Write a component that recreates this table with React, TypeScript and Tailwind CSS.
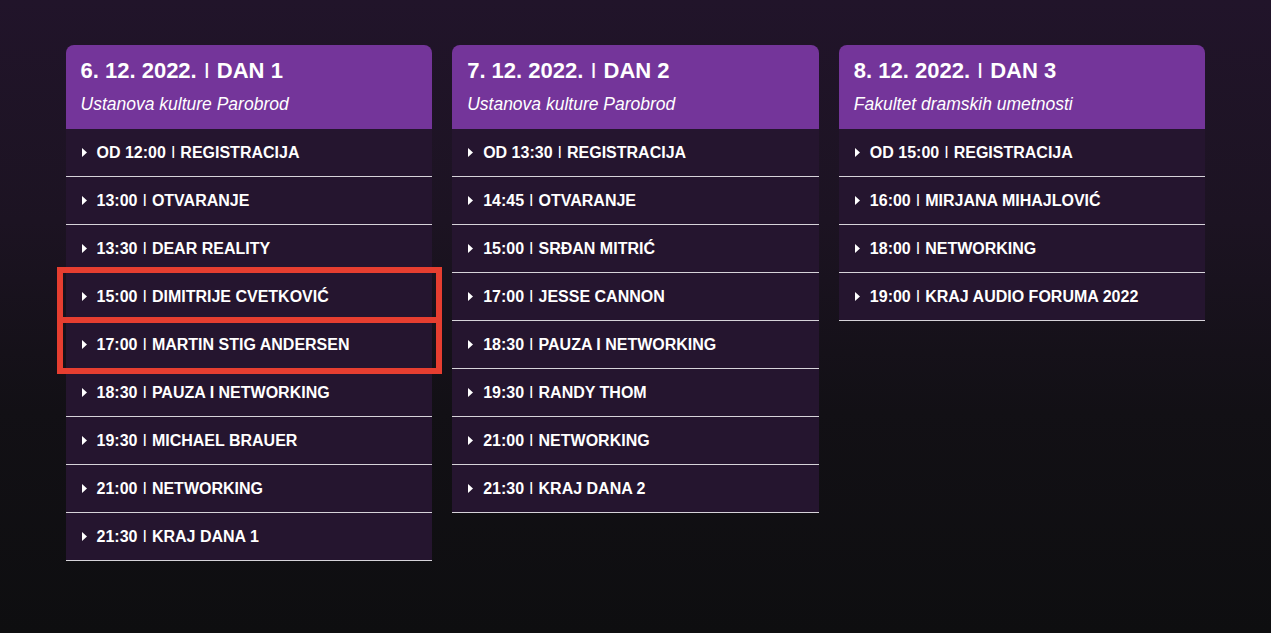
import React from "react";

type Day = { title: string; place: string; items: string[] };

const days: Day[] = [
  {
    title: "6. 12. 2022.",
    place: "Ustanova kulture Parobrod",
    items: [
      "OD 12:00|REGISTRACIJA",
      "13:00|OTVARANJE",
      "13:30|DEAR REALITY",
      "15:00|DIMITRIJE CVETKOVIĆ",
      "17:00|MARTIN STIG ANDERSEN",
      "18:30|PAUZA I NETWORKING",
      "19:30|MICHAEL BRAUER",
      "21:00|NETWORKING",
      "21:30|KRAJ DANA 1",
    ],
  },
  {
    title: "7. 12. 2022.",
    place: "Ustanova kulture Parobrod",
    items: [
      "OD 13:30|REGISTRACIJA",
      "14:45|OTVARANJE",
      "15:00|SRĐAN MITRIĆ",
      "17:00|JESSE CANNON",
      "18:30|PAUZA I NETWORKING",
      "19:30|RANDY THOM",
      "21:00|NETWORKING",
      "21:30|KRAJ DANA 2",
    ],
  },
  {
    title: "8. 12. 2022.",
    place: "Fakultet dramskih umetnosti",
    items: [
      "OD 15:00|REGISTRACIJA",
      "16:00|MIRJANA MIHAJLOVIĆ",
      "18:00|NETWORKING",
      "19:00|KRAJ AUDIO FORUMA 2022",
    ],
  },
];

function Sep({ gap }: { gap: string }) {
  return <span className={`font-normal ${gap}`}>I</span>;
}

function Row({ text }: { text: string }) {
  const [time, label] = text.split("|");
  return (
    <div className="flex items-center h-[48px] border-b border-[#d6d3d9] bg-[#25152f] pl-[16px]">
      <svg width="5" height="9" viewBox="0 0 5 9" className="shrink-0">
        <path d="M0 0 L5 4.5 L0 9 Z" fill="#ffffff" />
      </svg>
      <span className="ml-[10px] text-white font-bold text-[16px] leading-none whitespace-nowrap">
        {time}
        <Sep gap="mx-[5px]" />
        {label}
      </span>
    </div>
  );
}

export default function App() {
  return (
    <div
      className="min-h-screen w-full bg-[linear-gradient(180deg,#21142a_0%,#1c1322_35%,#121015_65%,#0e0e10_100%)]"
      style={{ fontFamily: '"Liberation Sans", Arial, Helvetica, sans-serif' }}
    >
      <div className="mx-auto w-[1140px] pt-[45px] pb-10 grid grid-cols-3 gap-5 items-start">
        {days.map((d, i) => (
          <div key={i} className="relative">
            <div className="bg-[#74359a] rounded-t-[8px] h-[84px] px-[15px] pt-[13px]">
              <div className="text-white font-bold text-[22px] leading-[26px] whitespace-nowrap">
                {d.title}
                <Sep gap="mx-[7px]" />
                DAN {i + 1}
              </div>
              <div className="text-white italic text-[17.5px] leading-[20px] mt-[10px] whitespace-nowrap">
                {d.place}
              </div>
            </div>
            {d.items.map((it, j) => (
              <Row key={j} text={it} />
            ))}
            {i === 0 && (
              <>
                <div className="absolute left-[-9px] top-[222px] w-[385px] h-[56px] border-[6px] border-[#e63e30] pointer-events-none" />
                <div className="absolute left-[-9px] top-[272px] w-[385px] h-[57px] border-[6px] border-[#e63e30] pointer-events-none" />
              </>
            )}
          </div>
        ))}
      </div>
    </div>
  );
}
